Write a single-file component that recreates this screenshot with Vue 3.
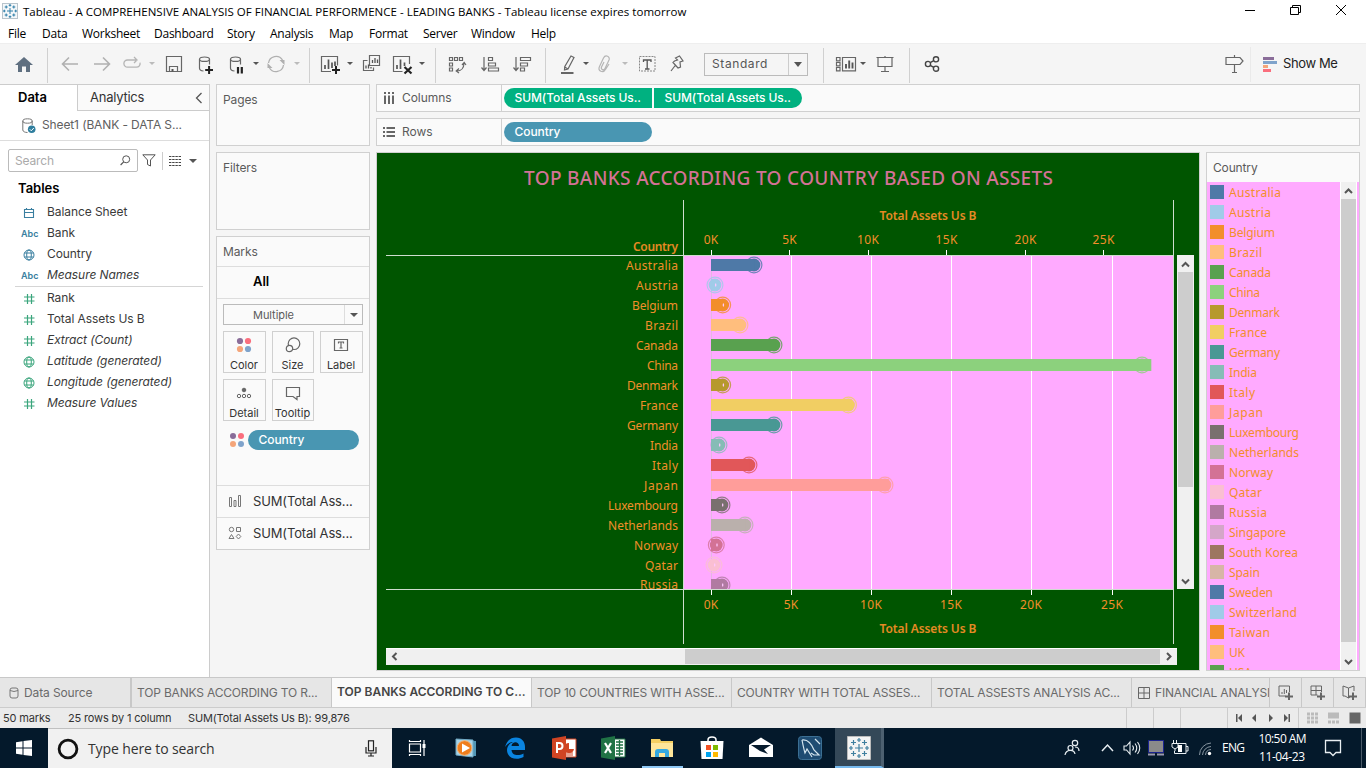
<script setup>
const menus = ['File', 'Data', 'Worksheet', 'Dashboard', 'Story', 'Analysis', 'Map', 'Format', 'Server', 'Window', 'Help']

const G = 'fill="none" stroke="#666" stroke-width="1.2"'
const cyl = (x) => `<g ${G}><ellipse cx="${x}" cy="-4.8" rx="5" ry="2.2"/><path d="M${x - 5}-4.8V4.2c0 1.6 1.8 2.6 4 2.8M${x + 5}-4.8V.5"/></g>`
const icons = {
  home: '<path d="M-9 1L0-7L9 1H6V8H2V2.500H-2V8H-6V1Z" fill="#5f6f80"/>',
  back: '<path d="M8 0H-7M-1-6.500L-7.500 0L-1 6.500" fill="none" stroke="#b0b0b0" stroke-width="1.6"/>',
  forward: '<path d="M-8 0H7M1-6.500L7.500 0L1 6.500" fill="none" stroke="#b0b0b0" stroke-width="1.6"/>',
  redo: '<path d="M4-4H-4.500a3.600 3.600 0 0 0 0 7.200H4.500a3.600 3.600 0 0 0 3.500-4.500M2-7L5-4L2-1" fill="none" stroke="#b5b5b5" stroke-width="1.3"/>',
  save: `<path d="M-7.500-7.500H7.500V7.500H-7.500ZM-4.500 7V2.500H3.500V7" ${G}/><path d="M-2.500 5h2v2.500h-2z" fill="#555"/>`,
  addData: cyl(-1.5) + '<path d="M-.8 6H7M3.100 2V10" stroke="#222" stroke-width="2"/>',
  pauseData: cyl(-0.5) + '<path d="M2 3V9.500M5.800 3V9.500" stroke="#222" stroke-width="2.2"/>',
  refresh: '<path d="M-7.500-1A7.600 7.600 0 0 1 6.500-4M7.500 1A7.600 7.600 0 0 1-6.500 4" fill="none" stroke="#b0b0b0" stroke-width="1.3"/><path d="M3.500-4H8.500V1ZM-3.500 4H-8.500V-1Z" fill="#b0b0b0"/>',
  newSheet: `<path d="M7.500 1.500V-7.500H-8.500V7.500H1" ${G}/><path d="M-5 5V1M-1.500 5V-4.500M2 4V-1.500M5 2V-2.500" stroke="#555" stroke-width="1.7" fill="none"/><path d="M2 6H10M6 2V10" stroke="#222" stroke-width="2"/>`,
  duplicate: `<path d="M-2.500-8.500H7.500V1.500H-2.500Z M-4.500-3.500H-8.500V6.500H1.500V3.500" ${G}/><path d="M.5-1V-4M3-1V-6M5.500-1V-4.500M-6 4.500V1.500M-3.500 4.500V.5M-1 4.500V3" stroke="#555" stroke-width="1.3"/>`,
  clearSheet: `<path d="M6.500 0V-7.500H-9.500V7.500H-.5" ${G}/><path d="M-6 5V1M-2.500 5V-4.500M1.500 2V-1.500" stroke="#555" stroke-width="1.7"/><path d="M1.500 3L8.500 9.500M8.500 3L1.500 9.500" stroke="#222" stroke-width="2.2"/>`,
  swap: `<path d="M-7.500-6.500h3v3h-3zM-2.500-6.500h3v3h-3zM2.500-6.500h3v3h-3zM-7.500-1h3v3h-3zM-7.500 4h3v3h-3zM7-1C7 4 4 7 0 7M5 1L7.200-1.500L9 1M2 4.500L-.8 7L2 9" ${G}/>`,
  sortAsc: `<path d="M-6-7V6M-8.500 3.500L-6 6.500L-3.500 3.500M-1.500-6.500h4v3h-4zM-1.500-1h7v3h-7zM-1.500 4h10v3h-10z" ${G}/>`,
  sortDesc: `<path d="M-6-7V6M-8.500 3.500L-6 6.500L-3.500 3.500M-1.500-6.500h10v3h-10zM-1.500-1h7v3h-7zM-1.500 4h4v3h-4z" ${G}/>`,
  pen: `<path d="M3-8L6-6.500L0 5L-3.500 6L-3.300 2.800ZM-3.300 3L0 5" ${G}/><path d="M-7 9H5.500" stroke="#666" stroke-width="2"/>`,
  clip: '<path d="M-1-2L-3.500 3C-4.500 5.500-1 7 0 4.500L4-4C5.500-7.500.5-10-1.500-6L-5.500 2.500C-7.500 7-2 10 .8 5L4 0" fill="none" stroke="#b5b5b5" stroke-width="1.2"/>',
  textLabel: '<path d="M-7.500-7.500h15.500v14.500h-15.500z" fill="none" stroke="#888" stroke-dasharray="2 1"/><path d="M-3.500-2V-4H4V-2M.2-4V5M-2 5H2.500" fill="none" stroke="#555" stroke-width="1.3"/>',
  pin: `<path d="M-1.500-6L2.500-8L6-3L3-2L3.500 3L1 4L-4-1.500L-2.500-3L.5-4ZM-1.800 1.500L-6 7" ${G}/>`,
  cards: `<path d="M-9.500-6.500h3.500v3.300h-3.500zM-9.500-1.500h3.500v3.300h-3.500zM-9.500 3.500h3.500v3.300h-3.500zM-3.500-6.500H9.500V6.800H-3.500Z" ${G}/><path d="M0 4.500V0M3.200 4.500V-3.500M6.500 4.500V-1.500" stroke="#555" stroke-width="1.900"/>`,
  present: `<path d="M-8.500-6.500H8.500M-7-6.500V2.500H7V-6.500M0-8V-6.500M0 2.500V7.500M-4 7.500H4" ${G} />`,
  share: '<g fill="none" stroke="#444" stroke-width="1.4"><circle cx="-4" cy="0" r="2.600"/><circle cx="4" cy="-4.700" r="2.600"/><circle cx="4" cy="4.700" r="2.600"/><path d="M-1.800-1.300L1.800-3.400M-1.800 1.300L1.800 3.400"/></g>',
  signpost: `<path d="M-8-6.500H6L9-3L6 .5H-8ZM.5-9V-6.500M.5.5V8M-2 8.500H3" ${G}/>`
}

// gap: free space before the item; s = separator, c = caret, otherwise an icon name
const tools = [
  ['home', 14], ['s', 13], ['back', 12], ['forward', 12], ['redo', 10], ['c', 6, 1], ['save', 8], ['addData', 12],
  ['pauseData', 10], ['c', 6], ['refresh', 6], ['c', 7, 1], ['s', 8], ['newSheet', 10], ['c', 6], ['duplicate', 8],
  ['clearSheet', 11], ['c', 5], ['s', 9], ['swap', 11], ['sortAsc', 13], ['sortDesc', 12], ['s', 13], ['pen', 12],
  ['c', 4], ['clip', 5], ['c', 6, 1], ['textLabel', 8], ['pin', 10], ['select', 17], ['s', 15], ['cards', 12],
  ['c', 3], ['present', 8], ['s', 14], ['share', 12]
]

const fields = [
  ['date', 'Balance Sheet'], ['abc', 'Bank'], ['globe', 'Country'], ['abc', 'Measure Names', 1],
  ['hash', 'Rank'], ['hash', 'Total Assets Us B'], ['hash', 'Extract (Count)', 1],
  ['globe', 'Latitude (generated)', 1], ['globe', 'Longitude (generated)', 1], ['hash', 'Measure Values', 1]
]

const palette = ['#4e79a7', '#a0cbe8', '#f28e2b', '#ffbe7d', '#59a14f', '#8cd17d', '#b6992d', '#f1ce63', '#499894', '#86bcb6',
  '#e15759', '#ff9d9a', '#79706e', '#bab0ac', '#d37295', '#fabfd2', '#b07aa1', '#d4a6c8', '#9d7660', '#d7b5a6']
const legend = ['Australia', 'Austria', 'Belgium', 'Brazil', 'Canada', 'China', 'Denmark', 'France', 'Germany', 'India', 'Italy',
  'Japan', 'Luxembourg', 'Netherlands', 'Norway', 'Qatar', 'Russia', 'Singapore', 'South Korea', 'Spain', 'Sweden',
  'Switzerland', 'Taiwan', 'UK', 'USA']
const textWidths = [52, 42, 46, 33, 42, 31, 51, 38, 51, 28, 26, 34, 70, 70, 44, 33, 38, 57, 69, 31, 44, 68, 41, 16, 23]
const marks = [754, 715, 722.7, 740, 774, 1142, 722.7, 848.5, 774, 719, 749, 885, 722, 745, 716.3, 714, 722]
const rows = marks.map((cx, i) => ({
  cx, y: 265 + i * 20, name: legend[i], color: palette[i], len: textWidths[i], w: (cx - 711) * 1.0216
}))
const axisTop = [711, 789.5, 868, 946.5, 1025.500, 1103.500]
const axisBottom = [711.500, 791.500, 871.500, 951.500, 1031.500, 1112.500]
const tickNames = ['0K', '5K', '10K', '15K', '20K', '25K']
const tickLens = [14.5, 14.5, 22, 22, 22, 22]

const sheets = ['TOP BANKS ACCORDING TO R...', 'TOP BANKS ACCORDING TO C...', 'TOP 10 COUNTRIES WITH ASSE...', 'COUNTRY WITH TOTAL ASSES...', 'TOTAL ASSESTS ANALYSIS AC...']

const apps = {
  taskview: '<path d="M-7.500-4H3.500V4H-7.500ZM-7.500-8V-6.500H3.500V-8M-7.500 8V6.500H3.500V8M7-8V8" fill="none" stroke="#fff" stroke-width="1.2"/><path d="M5.500-4h3v4h-3z" fill="#fff"/>',
  wmp: '<path d="M-5-8L10-7V8H-3Z" fill="#5296b5"/><path d="M-10-9L7-8V9L-10 7Z" fill="#a9d4e8" stroke="#6fa8c4"/><circle cx="-1.500" r="7.300" fill="#ef7d1c" stroke="#f5b273"/><path d="M-4-4.500L4 0L-4 4.500Z" fill="#fff"/>',
  edge: '<path d="M-10-1C-8-8-4-10.500 1-10.500C7-10.500 10-6 10-1V2H-3.500C-3 8 4 8 8.500 5.500V9C1 13-8 10-8 2C-8-2-5-5-2-6C-5-6-8-4-10-1ZM-3.500-2H4C4-7-3-7-3.500-2Z" fill="#0a84e0"/>',
  ppt: '<path d="M0-9H12V9H0Z" fill="#fff" stroke="#d04423"/><path d="M5-5V1H10A5 5 0 1 1 5-5" fill="#d04423"/><path d="M2 5H9M2 7H9" stroke="#d04423"/><path d="M-12-9.500L2-12V12L-12 9.500Z" fill="#d04423"/><path d="M-7 5V-5H-4.500A3 3 0 0 1-4.500 1H-7" fill="none" stroke="#fff" stroke-width="2"/>',
  excel: '<path d="M0-9H12V9H0Z" fill="#fff" stroke="#207245"/><path d="M3-6H10M3-3H10M3 0H10M3 3H10M3 6H10M6.500-8V8" stroke="#207245" stroke-width="1.300"/><path d="M-12-9.500L2-12V12L-12 9.500Z" fill="#207245"/><path d="M-8-5L-2 5M-2-5L-8 5" stroke="#fff" stroke-width="2.200"/>',
  explorer: '<path d="M-11-9H-2L-1-7H11V9H-11Z" fill="#f5cf62"/><path d="M-11-5H11V9H-11Z" fill="#ffe69a"/><path d="M-7 9V4Q-7 1-4 1H4Q7 1 7 4V9H3V5H-3V9Z" fill="#35a9e1"/>',
  store: '<path d="M-4-6V-8Q-4-11 0-11T4-8V-6" fill="none" stroke="#fff" stroke-width="1.500"/><path d="M-11.500-7H11.500L10.500 11H-10.500Z" fill="#fff"/><path d="M-6-3h5v5h-5z" fill="#f25022"/><path d="M1-3h5v5h-5z" fill="#7fba00"/><path d="M-6 4h5v5h-5z" fill="#00a4ef"/><path d="M1 4h5v5h-5z" fill="#ffb900"/>',
  mail: '<path d="M-12-3L0-10.500L12-3V9H-12Z" fill="#fff"/><path d="M-10-3H10L3 1.500L7 6L-1 3Z" fill="#061b2d"/>',
  mysql: '<rect x="-11.500" y="-11.500" width="23" height="23" rx="3" fill="#1e4c72" stroke="#3b6f93"/><path d="M-8-8C-2-9 2-3 4 2L9 7L4 7L1 5M-8-8C-7-3-6 2-5 5L-3 1L2 9M5-9L10-4" fill="none" stroke="#d5e6ef" stroke-width="1.200"/>',
  tableau: '<path d="M-11.500-11.500h23v23h-23z" fill="#f4f4f4" stroke="#bbb"/><path d="M0-4V4M-4 0H4M0-10V-6M-2-8H2M0 6V10M-2 8H2M-8-2V2M-10 0H-6M8-2V2M6 0H10M-5.500-8V-3M-8-5.500H-3M5.500-8V-3M3-5.500H8M-5.500 3V8M-8 5.500H-3M5.500 3V8M3 5.500H8" stroke="#3f7f9f" stroke-width="1.200"/>'
}
</script>

<template>
  <div class="screen">
    <header class="titlebar">
      <svg class="logo" viewBox="-8 -8 16 16"><rect x="-7.500" y="-7.500" width="15" height="15" fill="#f5f8fa" stroke="#b8c4cc" /><path d="M0-3V3M-3 0H3M0-7V-4.500M-1.300-5.700H1.300M0 4.500V7M-1.300 5.700H1.300M-5.700-1.300V1.300M-7 0H-4.500M5.700-1.300V1.300M4.500 0H7M-3.800-5.500V-2.500M-5.300-4H-2.300M3.800-5.500V-2.500M2.300-4H5.300M-3.800 2.500V5.500M-5.300 4H-2.300M3.800 2.500V5.500M2.300 4H5.300" stroke="#2f7fa8" /></svg>
      <span class="title">Tableau - A COMPREHENSIVE ANALYSIS OF FINANCIAL PERFORMENCE - LEADING BANKS - Tableau license expires tomorrow</span>
      <svg class="winbtns" viewBox="0 0 130 22" fill="none" stroke="#000"><path d="M9 10.500H19M54.500 7.500H62.500V14.500H54.500ZM56.500 7V5.500H64.500V12.500H63M100 5L110 15M110 5L100 15" /></svg>
    </header>
    <nav class="menubar"><span v-for="m in menus" :key="m">{{ m }}</span></nav>

    <div class="toolbar">
      <template v-for="(t, i) in tools" :key="i">
        <span v-if="t[0] === 's'" class="sep" :style="{ marginLeft: t[1] + 'px' }"></span>
        <span v-else-if="t[0] === 'c'" class="caret" :class="{ dim: t[2] }" :style="{ marginLeft: t[1] + 'px' }"></span>
        <span v-else-if="t[0] === 'select'" class="select" :style="{ marginLeft: t[1] + 'px' }"><b>Standard</b><i></i></span>
        <svg v-else class="tool" viewBox="-10 -10 20 20" :style="{ marginLeft: t[1] + 'px' }" v-html="icons[t[0]]"></svg>
      </template>
      <svg class="tool sign" viewBox="-10 -10 20 20" v-html="icons.signpost"></svg>
      <div class="showme">
        <svg width="14" height="15"><path d="M0 0h11v3H0z" fill="#8a6d99" /><path d="M0 4h14v3H0z" fill="#7fa3cb" /><path d="M0 8h5v3H0z" fill="#f4a57a" /><path d="M0 12h8v3H0z" fill="#fa6e7d" /></svg>
        <span>Show Me</span>
      </div>
    </div>

    <main class="work">
      <aside class="datapane">
        <div class="tabs"><b>Data</b><span>Analytics<svg width="8" height="12"><path d="M6.500 1L1.500 6L6.500 11" fill="none" stroke="#555" stroke-width="1.300" /></svg></span></div>
        <div class="source">
          <svg width="14" height="16" fill="none" stroke="#777"><ellipse cx="5.500" cy="3" rx="4.700" ry="2.200" /><path d="M.8 3V12C.8 13.500 3 14.500 5.500 14.500M10.200 3V7" /><circle cx="9.700" cy="11.300" r="3.800" fill="#2f7e9e" stroke="none" /><path d="M7.800 11.300L9.300 12.800L11.800 10" stroke="#fff" /></svg>
          <span>Sheet1 (BANK - DATA S...</span>
        </div>
        <div class="searchrow">
          <div class="search"><span>Search</span><svg width="11" height="11" fill="none" stroke="#555"><circle cx="6.200" cy="4.300" r="3.500" /><path d="M3.700 6.900L.6 10" stroke-width="1.200" /></svg></div>
          <svg class="funnel" width="14" height="13" fill="none" stroke="#555"><path d="M.8.8H13.200L8.500 6V12L5.500 10.500V6Z" /></svg>
          <span class="vline"></span>
          <svg class="listic" width="12" height="10"><path d="M0 .5H12M0 3.500H12M0 6.500H12M0 9.500H12" stroke="#444" stroke-dasharray="2.400 .8" /></svg>
          <span class="caret big"></span>
        </div>
        <h3>Tables</h3>
        <ul class="fields">
          <li v-for="(f, i) in fields" :key="i" :class="{ gen: f[2], split: i === 4, measure: i > 3 }">
            <span class="ficon">
              <b v-if="f[0] === 'abc'">Abc</b>
              <svg v-else width="12" height="12" fill="none" stroke="currentColor">
                <path v-if="f[0] === 'date'" d="M1.500 2.500H10.500V10.500H1.500ZM1.500 5.500H10.500M3.500 1V3M8.500 1V3" stroke-width="1.100" />
                <g v-else-if="f[0] === 'globe'"><circle cx="6" cy="6" r="5" /><ellipse cx="6" cy="6" rx="2.300" ry="5" /><path d="M1.500 4H10.500M1.500 8H10.500" /></g>
                <path v-else d="M4.500 1V11M8.500 1V11M1 4H11.500M1 8H11.500" stroke-width="1.200" />
              </svg>
            </span>
            <span class="fname">{{ f[1] }}</span>
          </li>
        </ul>
      </aside>

      <section class="cards">
        <div class="card pages">Pages</div>
        <div class="card filters">Filters</div>
        <div class="card marks">
          <div class="mhead">Marks</div>
          <div class="mall">All</div>
          <div class="mbody">
            <div class="mselect"><span>Multiple</span><i></i></div>
            <div class="mgrid">
              <div><svg viewBox="-8 -8 16 16"><circle cx="-4" cy="-4" r="3.100" fill="#8a6d99" /><circle cx="4" cy="-4" r="3.100" fill="#fa6e7d" /><circle cx="-4" cy="4" r="3.100" fill="#f4a57a" /><circle cx="4" cy="4" r="3.100" fill="#7fa3cb" /></svg>Color</div>
              <div><svg viewBox="-8 -8 16 16" fill="none" stroke="#666" stroke-width="1.200"><circle cx="1" cy="-1.300" r="5.800" /><circle cx="-3.500" cy="3.500" r="3.200" fill="#fafafa" /></svg>Size</div>
              <div><svg viewBox="-8 -8 16 16" fill="none" stroke="#666"><path d="M-6.500-5.500H6.500V5.500H-6.500ZM-2.500-1.500V-3H2.500V-1.500M0-3V3M-1.500 3H1.500" stroke-width="1.200" /></svg>Label</div>
              <div><svg viewBox="-8 -8 16 16" fill="none" stroke="#666"><circle cx="0" cy="-3" r="1.800" fill="#666" /><circle cx="-5" cy="3" r="1.700" /><circle cx="0" cy="3" r="1.700" /><circle cx="5" cy="3" r="1.700" /></svg>Detail</div>
              <div><svg viewBox="-8 -8 16 16" fill="none" stroke="#666"><path d="M-6.500-5.500H6.500V3.500H4V6.500L0 3.500H-6.500Z" stroke-width="1.200" /></svg>Tooltip</div>
            </div>
            <div class="mpill">
              <svg viewBox="-8 -8 16 16"><circle cx="-4" cy="-4" r="3" fill="#8a6d99" /><circle cx="4" cy="-4" r="3" fill="#fa6e7d" /><circle cx="-4" cy="4" r="3" fill="#f4a57a" /><circle cx="4" cy="4" r="3" fill="#7fa3cb" /></svg>
              <span class="pill dim">Country</span>
            </div>
          </div>
          <div class="msum"><svg viewBox="0 0 14 14" fill="none" stroke="#777"><path d="M1.500 3.500H3.500V12.500H1.500ZM6 6.500H8V12.500H6ZM10.500 1.500H12.500V12.500H10.500Z" /></svg>SUM(Total Ass...</div>
          <div class="msum"><svg viewBox="0 0 14 14" fill="none" stroke="#777"><circle cx="3.500" cy="3.500" r="2.200" /><path d="M8.500 1.500H12.500V5.500H8.500ZM1 12.500L3.500 8.500L6 12.500ZM10.500 8L12.800 10.500L10.500 13L8.200 10.500Z" /></svg>SUM(Total Ass...</div>
        </div>
      </section>

      <section class="canvas">
        <div class="card shelf">
          <div class="shname"><svg width="12" height="12"><path d="M2 0V2M6 0V2M10 0V2M2 3.500V12M6 3.500V12M10 3.500V12" stroke="#666" stroke-width="2" /></svg>Columns</div>
          <span class="pill meas first">SUM(Total Assets Us..</span><span class="pill meas last">SUM(Total Assets Us..</span>
        </div>
        <div class="card shelf">
          <div class="shname"><svg width="12" height="12"><path d="M0 2H2M3.500 2H12M0 6H2M3.500 6H12M0 10H2M3.500 10H12" stroke="#666" stroke-width="2" /></svg>Rows</div>
          <span class="pill dim">Country</span>
        </div>
        <div class="stage">
          <svg class="viz" viewBox="377 153 822 517">
            <rect x="377" y="153" width="822" height="517" fill="#005500" />
            <rect x="684" y="255" width="490" height="334" fill="#ffaaff" />
            <text class="vtitle" x="524" y="185" textLength="529">TOP BANKS ACCORDING TO COUNTRY BASED ON ASSETS</text>
            <g stroke="#fff">
              <path v-for="x in axisBottom.slice(1)" :key="x" :d="`M${x} 256V595`" />
              <path d="M711.500 590V595" />
              <path v-for="x in axisTop" :key="x" :d="`M${Math.floor(x) + 0.5} 250V255`" />
            </g>
            <path d="M711.500 256V589" stroke="#e3b9e3" />
            <path d="M386 255.500H1173.500M683.500 200V644M1173.500 200V644M386 589.500H1173.500" stroke="#cfdccf" fill="none" />
            <clipPath id="rowsClip"><rect x="386" y="256" width="788" height="333" /></clipPath>
            <g clip-path="url(#rowsClip)">
              <g v-for="r in rows" :key="r.name">
                <text class="lab" :x="678 - r.len" :y="r.name === 'Russia' ? r.y + 4 : r.y + 5" :textLength="r.len">{{ r.name }}</text>
                <circle :cx="r.cx" :cy="r.y" r="7.900" fill="none" :stroke="r.color" stroke-width="1.200" stroke-opacity=".8" />
                <circle :cx="r.cx" :cy="r.y" r="6.400" :fill="r.color" />
                <rect x="711" :y="r.y - 6" :width="r.w" height="12" :fill="r.color" />
                <ellipse v-if="r.cx < 735" :cx="r.cx + 0.700" :cy="r.y" rx=".7" ry="1.800" fill="#ffc8ff" />
              </g>
            </g>
            <text class="bold" x="879.500" y="220" textLength="97">Total Assets Us B</text>
            <text class="bold" x="879.500" y="633" textLength="97">Total Assets Us B</text>
            <text class="bold" x="633" y="251" textLength="45">Country</text>
            <text v-for="(n, i) in tickNames" :key="n" class="lab" :x="axisTop[i] - tickLens[i] / 2" y="244" :textLength="tickLens[i]">{{ n }}</text>
            <text v-for="(n, i) in tickNames" :key="'b' + n" class="lab" :x="axisBottom[i] - 0.500 - tickLens[i] / 2" y="609" :textLength="tickLens[i]">{{ n }}</text>
            <rect x="1177" y="255" width="17" height="334" fill="#f0f0f0" />
            <rect x="1178" y="272" width="15" height="215" fill="#cdcdcd" />
            <rect x="386" y="648" width="791" height="17" fill="#f0f0f0" />
            <rect x="685" y="649" width="475" height="15" fill="#cdcdcd" />
            <path d="M386 648.500H1177" stroke="#fff" />
            <path d="M1182 266.500L1185.500 263L1189 266.500M1182 579.500L1185.500 583L1189 579.500M396.500 653L393 656.500L396.500 660M1167 653L1170.500 656.500L1167 660" fill="none" stroke="#555" stroke-width="2" />
          </svg>
          <div class="legend">
            <div class="ltitle">Country</div>
            <div class="lbody">
              <ul>
                <li v-for="(n, i) in legend" :key="n">
                  <svg width="90" height="20"><rect y="3" width="14" height="14" :fill="palette[i % 20]" /><text class="lab" x="19" y="15" :textLength="textWidths[i]">{{ n }}</text></svg>
                </li>
              </ul>
              <svg class="lscroll" viewBox="0 0 17 488"><rect width="17" height="488" fill="#f0f0f0" /><rect x="0" width="1" height="488" fill="#fff" /><rect x="16" width="1" height="488" fill="#fff" /><rect x="1" y="17" width="15" height="443" fill="#cdcdcd" /><path d="M5 11L8.500 7.500L12 11M5 478L8.500 481.500L12 478" fill="none" stroke="#555" stroke-width="2" /></svg>
            </div>
          </div>
        </div>
      </section>
    </main>

    <div class="sheets">
      <div class="sheet src"><svg width="10" height="12" fill="none" stroke="#777"><rect x="1" y="1" width="8" height="10" rx="2" /><path d="M1 3.500Q5 5.500 9 3.500" /></svg>Data Source</div>
      <div v-for="(s, i) in sheets" :key="s" class="sheet" :class="{ on: i === 1 }">{{ s }}</div>
      <div class="sheet dash"><svg width="12" height="12" fill="none" stroke="#666"><path d="M.5.5H11.500V11.500H.5ZM6 .5V11.500M.5 6H11.500" /></svg>FINANCIAL ANALYSIS</div>
      <div class="add"><svg width="16" height="15" fill="none" stroke="#666"><path d="M11.500 7V1H1V11H7.500M4 9V7M6.300 9V4M8.500 8V5" /><path d="M7 11.500H15M11 7.500V15" stroke-width="2" /></svg></div>
      <div class="add"><svg width="16" height="15" fill="none" stroke="#666"><path d="M11.500 7V1H1V10H7.500M6 1V10M1 5.500H11.500" /><path d="M7 11.500H15M11 7.500V15" stroke-width="2" /></svg></div>
      <div class="add"><svg width="16" height="15" fill="none" stroke="#666"><path d="M6.500 3L1 1V11H3L6.500 13V3L12 1V6M6.500 13L8 12" /><path d="M7 11.500H15M11 7.500V15" stroke-width="2" /></svg></div>
    </div>

    <div class="status">
      <span class="s1">50 marks</span><span class="s2">25 rows by 1 column</span><span class="s3">SUM(Total Assets Us B): 99,876</span>
      <i class="cell w27"></i><i class="cell w27"></i><i class="cell w47"></i>
      <i class="cell w71"><svg width="54" height="8" fill="#555"><path d="M0 0h1.500v8H0zM6 0V8L2 4ZM20 0V8L16 4ZM33 0V8L37 4ZM48 0V8L52 4ZM52.500 0h1.500v8h-1.500z" /></svg></i>
      <i class="cell w68"><svg width="54" height="12"><path d="M0 2h11M0 6h11M0 10h11" stroke="#bbb" stroke-width="3" stroke-dasharray="3 1" /><path d="M21 .5h11v6H21z" fill="#bbb" /><path d="M21 10h11" stroke="#bbb" stroke-width="3" stroke-dasharray="3 1" /><path d="M42.500 .5h11v11h-11z" fill="#666" /></svg></i>
    </div>

    <footer class="taskbar">
      <div class="start"><svg width="16" height="16" fill="#fff"><path d="M0 2.300L6.500 1.300V7.500H0ZM7.500 1.100L16 0V7.500H7.500ZM0 8.500H6.500V14.700L0 13.700ZM7.500 8.500H16V16L7.500 14.900Z" /></svg></div>
      <div class="wsearch">
        <svg width="22" height="22"><circle cx="11" cy="11" r="8.900" fill="none" stroke="#111" stroke-width="2.800" /></svg>
        <span>Type here to search</span>
        <svg class="mic" width="12" height="17" fill="none" stroke="#222" stroke-width="1.200"><rect x="3.500" y=".8" width="5" height="10" /><path d="M1 7V13H11V7M6 13V16M3 16H9" /></svg>
      </div>
      <div v-for="(a, k) in apps" :key="k" class="app" :class="k"><svg viewBox="-12 -12 24 24" v-html="a"></svg></div>
      <svg class="tray" viewBox="1060 728 306 40" fill="none" stroke="#e8eef2">
        <g stroke-width="1.200"><circle cx="1075" cy="743" r="2.700" /><circle cx="1070.500" cy="748" r="2.500" /><path d="M1065 755C1066 749 1074 749 1075 754M1075 747C1078 747 1079 748 1079 751M1071 745" /></g>
        <path d="M1102 751L1107.500 745L1113 751" stroke-width="1.500" />
        <path d="M1124 746H1126.500L1130 742V754L1126.500 750H1124ZM1132.500 745.500Q1134.500 748 1132.500 750.500M1135 743.500Q1138.500 748 1135 752.500M1137.500 742Q1142 748 1137.500 754" stroke-width="1.100" />
        <path d="M1148.500 740.500H1163.500V752.500H1148.500Z" fill="#8a8a8a" stroke="#1a2390" /><path d="M1148 754.500H1155M1157 754.500H1164" stroke="#9a9ab0" stroke-width="2" />
        <path d="M1176.500 743.500H1186V753.500H1174.500V751M1186 746.500H1188V751H1186M1173.500 740V743M1176.500 740V743M1172 743.500H1178V747L1175 749L1172 747ZM1175 749V751" /><path d="M1178 745h4v7h-4z" fill="#fff" stroke="none" />
        <g stroke="#8795a0"><path d="M1199.500 755A12 12 0 0 1 1211 743M1202.500 755A9 9 0 0 1 1211 746.500M1205.500 755A6 6 0 0 1 1211 749.500" /></g><circle cx="1209.500" cy="753.500" r="1.700" fill="#fff" stroke="none" />
        <g class="tt"><text x="1222" y="752" textLength="23">ENG</text><text x="1258.500" y="743" textLength="48">10:50 AM</text><text x="1259" y="761" textLength="46">11-04-23</text></g>
        <path d="M1325.500 740.500H1340.500V752.500H1336L1333 755.500L1330 752.500H1325.500Z" stroke-width="1.300" />
        <path d="M1361.500 728V768" stroke="#4a5a68" />
      </svg>
    </footer>
  </div>
</template>

<style>
html, body { margin: 0; overflow: hidden; }
</style>

<style scoped>
.screen { width: 1366px; height: 768px; display: flex; flex-direction: column; background: #f5f5f5; font-family: Inter, sans-serif; font-size: 12px; color: #4a4a4a; overflow: hidden; white-space: nowrap; }
.screen * { box-sizing: border-box; }
ul { list-style: none; margin: 0; padding: 0; }
.titlebar { height: 22px; flex: none; display: flex; align-items: center; background: #fff; color: #000; font: 11.5px "Open Sans", sans-serif; }
.logo { width: 16px; height: 16px; margin-left: 2px; }
.title { margin-left: 5px; flex: 1; letter-spacing: 0.018px; padding-top: 1px; }
.winbtns { width: 130px; height: 22px; }
.menubar { height: 21px; flex: none; background: #fff; color: #000; font: 12px/23px "Open Sans", sans-serif; letter-spacing: -0.25px; padding-left: 8px; display: grid; grid-template-columns: 34px 40px 72px 73px 43px 59px 40px 54px 48px 60px 40px; }
.toolbar { height: 41px; flex: none; display: flex; align-items: center; border-top: 1px solid #eee; }
.tool { width: 20px; height: 20px; overflow: visible; flex: none; }
.sep { width: 1px; height: 35px; background: #d0d0d0; flex: none; margin-top: 2px; }
.caret { width: 8px; height: 4px; flex: none; display: flex; justify-content: center; }
.caret::after, .select i::after, .mselect i::after { content: ""; border: 2.5px solid transparent; border-top: 4px solid #555; border-bottom: 0; }
.caret::after { border-width: 3.5px 3px 0; }
.caret.dim::after { border-top-color: #bbb; }
.caret.big::after { border-width: 4px 4px 0; }
.select { width: 104px; height: 23px; border: 1px solid #bbb; display: flex; align-items: center; flex: none; }
.select b { flex: 1; padding: 0 0 2px 7px; font-weight: 400; color: #555; letter-spacing: 0.6px; }
.select i { width: 19px; height: 21px; border-left: 1px solid #ccc; display: flex; align-items: center; justify-content: center; }
.select i::after { border-width: 5px 4px 0; }
.sign { margin-left: auto; }
.showme { width: 116px; margin-left: 6px; height: 35px; border-left: 1px solid #eaeaea; display: flex; align-items: center; padding-left: 12px; color: #222; font-size: 13px; }
.showme span { margin-left: 6px; padding-bottom: 2px; letter-spacing: -0.4px; }
.work { height: 593px; flex: none; display: flex; }
.datapane { width: 210px; border-right: 1px solid #ccc; border-top: 1px solid #ccc; background: #fff; display: flex; flex-direction: column; }
.tabs { height: 26px; display: flex; color: #333; font-size: 13px; line-height: 25px; }
.tabs b { width: 77px; padding-left: 18px; color: #000; font-weight: 600; letter-spacing: 0; }
.tabs span { flex: 1; border-left: 1px solid #ccc; border-bottom: 1px solid #ccc; background: #fafafa; padding: 0 6px 0 12px; display: flex; justify-content: space-between; align-items: center; letter-spacing: -0.25px; }
.source { height: 30px; border-bottom: 1px solid #ddd; display: flex; align-items: center; padding-left: 22px; color: #606060; }
.source span { margin-left: 6px; padding-bottom: 2px; letter-spacing: -0.12px; }
.searchrow { display: flex; align-items: center; padding-left: 8px; margin-top: 8px; height: 23px; }
.search { width: 130px; height: 23px; border: 1px solid #bbb; border-radius: 2px; display: flex; align-items: center; justify-content: space-between; padding: 0 6px; color: #aaa; letter-spacing: -0.15px; }
.funnel { margin-left: 4px; }
.vline { width: 1px; height: 18px; background: #ccc; margin: 0 6px; }
.caret.big { margin-left: 8px; }
h3 { margin: 8px 0 0 18px; font-size: 13px; line-height: 16px; font-weight: 600; color: #000; letter-spacing: 0; }
.fields { margin: 6px 6px 0 15px; color: #3a3a3a; }
.fields li { height: 21px; display: flex; align-items: center; letter-spacing: -0.08px; }
.fields li.split { border-top: 1px solid #d5d5d5; height: 23px; padding-top: 1px; }
.fname { padding-bottom: 2px; }
.gen { font-style: italic; }
.ficon { width: 32px; color: #3a7fa0; font-style: normal; display: flex; padding-left: 8px; }
.ficon b { font-size: 9px; margin-left: -2px; font-weight: 600; letter-spacing: 0; }
.measure .ficon { color: #3aa57c; }
.cards { width: 154px; margin-left: 6px; display: flex; flex-direction: column; gap: 6px; }
.card { border: 1px solid #d0d0d0; background: #fafafa; }
.pages, .filters { padding: 7px 6px; line-height: 16px; color: #5a5a5a; letter-spacing: -0.12px; }
.pages { height: 62px; }
.filters { height: 78px; }
.marks { height: 314px; color: #5a5a5a; }
.mhead { height: 30px; padding-left: 6px; line-height: 29px; border-bottom: 1px solid #ddd; letter-spacing: -0.12px; }
.mall { height: 32px; padding-left: 36px; line-height: 29px; border-bottom: 1px solid #ddd; color: #000; font-weight: 600; font-size: 13px; }
.mbody { height: 186px; padding: 5px 6px 0; }
.mselect { height: 21px; border: 1px solid #bbb; display: flex; align-items: center; font-size: 11px; letter-spacing: -0.05px; }
.mselect span { flex: 1; padding-left: 29px; }
.mselect i { width: 18px; height: 19px; border-left: 1px solid #ddd; display: flex; align-items: center; justify-content: center; }
.mselect i::after { border-width: 4px 4px 0; }
.mgrid { display: grid; grid-template-columns: 43px 42px 43px; column-gap: 6px; row-gap: 6px; margin-top: 6px; }
.mgrid div { height: 42px; border: 1px solid #d0d0d0; display: flex; flex-direction: column; align-items: center; font-size: 11px; line-height: 15px; color: #333; padding: 5px 1px 0 0; gap: 5px; }
.mgrid svg { width: 16px; height: 16px; flex: none; }
.mpill { display: flex; align-items: center; margin-top: 9px; padding-left: 6px; gap: 3px; }
.mpill svg { width: 16px; height: 16px; }
.msum { height: 32px; border-top: 1px solid #ddd; display: flex; align-items: center; padding: 0 0 2px 11px; gap: 11px; color: #333; font-size: 13px; letter-spacing: -0.15px; }
.msum svg { width: 14px; height: 14px; }
.pill { height: 20px; line-height: 19px; padding-left: 10.5px; color: #fff; font-size: 12px; font-weight: 500; letter-spacing: -0.08px; }
.pill.dim { width: 148px; border-radius: 10px; background: #4996b2; }
.mpill .pill.dim { width: 111px; }
.pill.meas { width: 148px; background: #00b180; }
.first { border-radius: 10px 0 0 10px; }
.last { border-radius: 0 10px 10px 0; margin-left: 2px; }
.canvas { width: 984px; margin-left: 6px; display: flex; flex-direction: column; gap: 6px; }
.shelf { height: 28px; display: flex; align-items: center; flex: none; }
.shname { width: 125px; height: 26px; border-right: 1px solid #d0d0d0; margin-right: 2px; display: flex; align-items: center; padding: 0 0 1px 6px; gap: 7px; color: #5a5a5a; letter-spacing: -0.05px; }
.stage { display: flex; gap: 6px; height: 519px; }
.viz { width: 824px; height: 519px; border: 1px solid #d0d0d0; flex: none; }
.vtitle { font: 500 19px "Noto Sans", sans-serif; fill: #d37295; }
.lab { font: 12px "Noto Sans", sans-serif; fill: #f28e2b; }
.bold { font: 600 12px "Noto Sans", sans-serif; fill: #e58a24; }
.legend { width: 154px; border: 1px solid #d0d0d0; background: #fafafa; display: flex; flex-direction: column; }
.ltitle { height: 29px; line-height: 29px; padding-left: 6px; color: #5a5a5a; flex: none; letter-spacing: -0.15px; }
.lbody { background: #ffaaff; height: 488px; overflow: hidden; display: flex; }
.lbody ul { width: 133px; padding-left: 3px; }
.lbody li { height: 20px; }
.lbody li svg { display: block; }
.lscroll { width: 17px; height: 488px; flex: none; }
.sheets { height: 31px; flex: none; display: flex; background: #e6e6e6; border-top: 1px solid #c8c8c8; border-bottom: 1px solid #ccc; color: #6a6a6a; }
.sheet { width: 200px; border-right: 1px solid #c8c8c8; padding-left: 5px; line-height: 30px; flex: none; overflow: hidden; letter-spacing: -0.18px; }
.sheet.src { width: 132px; padding-left: 9px; display: flex; align-items: center; gap: 5px; border-right: 2px solid #c8c8c8; letter-spacing: -0.12px; }
.sheet.on { background: #fafafa; font-weight: 600; color: #444; line-height: 28px; letter-spacing: 0; }
.sheet.dash { width: 138px; display: flex; align-items: center; gap: 5px; padding-left: 6px; }
.sheet svg { flex: none; }
.add { width: 32px; border-right: 1px solid #c8c8c8; display: flex; align-items: center; justify-content: center; }
.status { height: 20px; flex: none; display: flex; align-items: center; background: #ebebeb; color: #333; font-size: 11px; padding-left: 3px; letter-spacing: -0.15px; }
.s1 { width: 65px; }
.s2 { width: 120px; }
.s3 { flex: 1; }
.cell { height: 20px; border-left: 1px solid #ccc; display: flex; align-items: center; padding-left: 8px; }
.w27 { width: 27px; }
.w47 { width: 47px; }
.w71 { width: 71px; }
.w68 { width: 68px; }
.taskbar { height: 40px; flex: none; background: #04192b; display: flex; }
.start { width: 48px; display: flex; align-items: center; justify-content: center; }
.wsearch { width: 344px; background: #f1f1f1; border-top: 1px solid #c0c0c0; display: flex; align-items: center; padding-left: 9px; color: #333; font: 14px "Open Sans", sans-serif; letter-spacing: -0.12px; }
.wsearch span { margin-left: 9px; flex: 1; }
.mic { margin-right: 15px; }
.app { width: 49.2px; display: flex; align-items: center; justify-content: center; flex: none; }
.app svg { width: 24px; height: 24px; overflow: visible; }
.app.tableau { background: #344858; border-bottom: 2px solid #76b9ed; border-right: 3px solid #4d6070; padding: 2px 0 0 2px; }
.app.explorer { border-bottom: 2px solid #8fc8f5; padding-top: 2px; margin: 0 4px 0 4px; width: 41px; }
.tray { width: 306px; height: 40px; margin-left: auto; }
.tt { fill: #fff; stroke: none; font: 12px "Open Sans", sans-serif; }
</style>
